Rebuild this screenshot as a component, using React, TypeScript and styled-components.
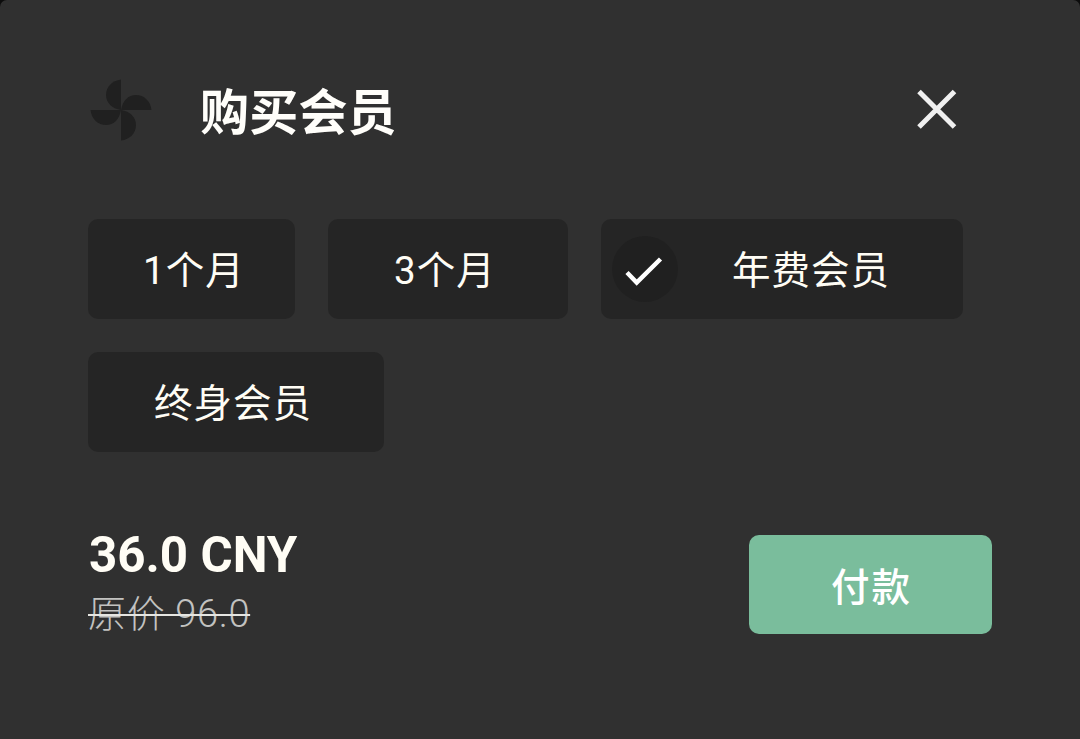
import React from 'react';
import styled, { createGlobalStyle } from 'styled-components';

const Global = createGlobalStyle`
  * { box-sizing: border-box; }
  body { margin: 0; background: #0c0c0c; }
`;
const Panel = styled.main`
  width: 1080px;
  height: 739px;
  padding: 78px 88px 0;
  background: #303030;
  border-radius: 7px 7px 0 0;
  font-family: Roboto, "Noto Sans CJK SC", sans-serif;
  color: #fffdf5;
  overflow: hidden;
`;
const Header = styled.header`
  display: flex;
  align-items: center;
  height: 64px;
  padding: 0 34px 0 2px;
`;
const Title = styled.h1`
  margin: 0 auto 0 48px;
  padding-top: 7px;
  font-size: 49px;
  line-height: 64px;
  font-weight: 700;
  letter-spacing: 0.2px;
  color: #fffefa;
`;
const CloseButton = styled.button`
  display: flex;
  padding: 0;
  border: 0;
  background: none;
`;
const Plans = styled.div`
  display: flex;
  flex-wrap: wrap;
  gap: 33px;
  margin-top: 77px;
`;
const Plan = styled.button<{ $width: number; $indent: number }>`
  display: flex;
  align-items: center;
  width: ${p => p.$width}px;
  height: 100px;
  padding: 0 0 0 ${p => p.$indent}px;
  border: 0;
  border-radius: 10px;
  background: #252525;
  color: #fffdf5;
  font: 400 38.5px/50px Roboto, "Noto Sans CJK SC", sans-serif;
  letter-spacing: 1px;
  white-space: nowrap;
`;
const PlanName = styled.span`
  padding-top: 3px;
`;
const Check = styled.span`
  display: flex;
  align-items: center;
  justify-content: center;
  width: 66px;
  height: 66px;
  margin-right: 54px;
  border-radius: 50%;
  background: #202020;
`;
const Footer = styled.footer`
  display: flex;
  justify-content: space-between;
  margin-top: 74px;
`;
const Price = styled.div`
  padding-left: 1px;
  font-size: 49.3px;
  line-height: 58px;
  font-weight: 700;
`;
const OriginalPrice = styled.del`
  display: block;
  width: max-content;
  padding-top: 1px;
  font-size: 38px;
  line-height: 58px;
  font-weight: 300;
  letter-spacing: 0.65px;
  color: #c2c2c0;
  text-decoration: line-through 2px #e6e6e2;
`;
const PayButton = styled.button`
  width: 243px;
  height: 99px;
  margin-top: 9px;
  padding: 6px 0 0 2px;
  border: 0;
  border-radius: 10px;
  background: #7abd9c;
  color: #fff;
  font: 500 38.5px/50px Roboto, "Noto Sans CJK SC", sans-serif;
  letter-spacing: 2px;
`;

const blade = 'M31 31V0.5C22 1.5 16 8 16 16C16 24 22 29.5 31 31Z';

export default function App() {
  return (
    <Panel>
      <Global />
      <Header>
        <svg width="62" height="62" viewBox="0 0 62 62" fill="#202020">
          {[0, 90, 180, 270].map(a => (
            <path key={a} d={blade} transform={`rotate(${a} 31 31)`} />
          ))}
        </svg>
        <Title>购买会员</Title>
        <CloseButton aria-label="关闭">
          <svg width="42" height="42" viewBox="0 0 42 42" fill="none" stroke="#f0f0f0" strokeWidth="5">
            <path d="M3 2.5L38.5 38M38.5 2.5L3 38" />
          </svg>
        </CloseButton>
      </Header>
      <Plans>
        <Plan $width={207} $indent={55}><PlanName>1个月</PlanName></Plan>
        <Plan $width={240} $indent={66}><PlanName>3个月</PlanName></Plan>
        <Plan $width={362} $indent={11}>
          <Check>
            <svg width="40" height="34" viewBox="0 0 40 34" fill="none" stroke="#fff" strokeWidth="4.5">
              <path d="M2 20.5L11.7 30.5L35.5 7" />
            </svg>
          </Check>
          <PlanName>年费会员</PlanName>
        </Plan>
        <Plan $width={296} $indent={66}><PlanName>终身会员</PlanName></Plan>
      </Plans>
      <Footer>
        <div>
          <Price>36.0 CNY</Price>
          <OriginalPrice>原价 96.0</OriginalPrice>
        </div>
        <PayButton>付款</PayButton>
      </Footer>
    </Panel>
  );
}
